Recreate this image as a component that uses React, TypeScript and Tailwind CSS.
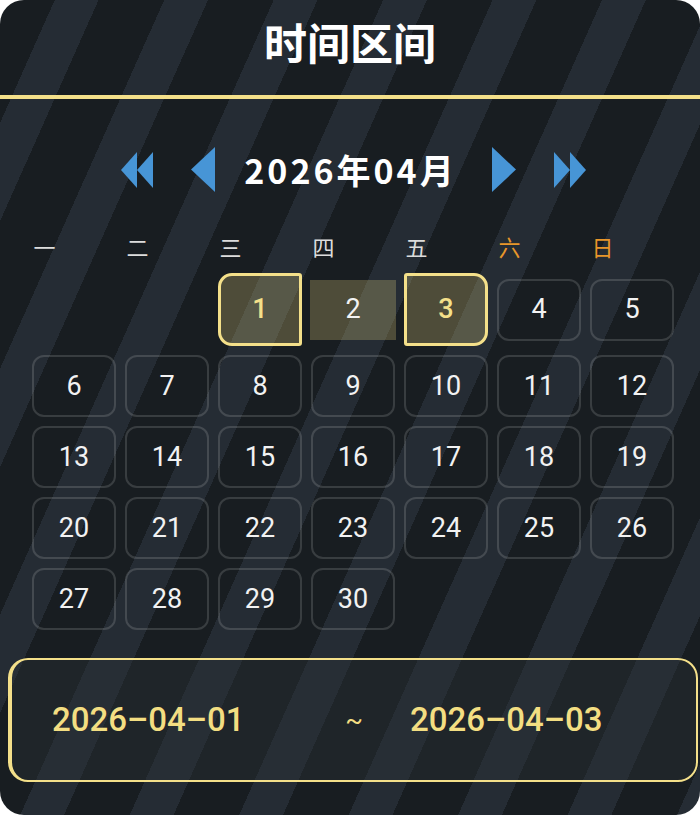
import React from 'react';

// April 2026 starts on a Wednesday
const weekdays = ['一', '二', '三', '四', '五', '六', '日'];
const cells: (number | null)[] = [null, null, ...Array.from({ length: 30 }, (_, i) => i + 1)];

const DoubleLeft = () => (
  <svg width="32" height="36" viewBox="0 0 32 36" className="shrink-0">
    <polygon points="0,18 16,0 16,36" fill="#4795d6" />
    <polygon points="16,18 32,0 32,36" fill="#4795d6" />
  </svg>
);

const SingleLeft = () => (
  <svg width="24" height="45" viewBox="0 0 24 45" className="shrink-0">
    <polygon points="0,22.5 24,0 24,45" fill="#4795d6" />
  </svg>
);

const SingleRight = () => (
  <svg width="24" height="45" viewBox="0 0 24 45" className="shrink-0">
    <polygon points="0,0 24,22.5 0,45" fill="#4795d6" />
  </svg>
);

const DoubleRight = () => (
  <svg width="32" height="36" viewBox="0 0 32 36" className="shrink-0">
    <polygon points="0,0 16,18 0,36" fill="#4795d6" />
    <polygon points="16,0 32,18 16,36" fill="#4795d6" />
  </svg>
);

const DayCell = ({ day }: { day: number | null }) => {
  if (day === null) return <div />;

  // range start
  if (day === 1) {
    return (
      <div className="h-[73px] flex items-center justify-center rounded-l-[14px] rounded-r-[3px] border-[3px] border-[#f4e08a] bg-[#f0dc82]/25 text-[#f4e08a] font-medium">
        {day}
      </div>
    );
  }
  // inside range
  if (day === 2) {
    return (
      <div className="h-[60px] -mx-px flex items-center justify-center bg-[#f0dc82]/25 text-[#f2f2f2]">
        {day}
      </div>
    );
  }
  // range end
  if (day === 3) {
    return (
      <div className="h-[73px] flex items-center justify-center rounded-r-[14px] rounded-l-[3px] border-[3px] border-[#f4e08a] bg-[#f0dc82]/25 text-[#f4e08a] font-medium">
        {day}
      </div>
    );
  }
  return (
    <div className="h-[62px] flex items-center justify-center rounded-[12px] border-2 border-white/[0.14] text-[#f2f2f2]">
      {day}
    </div>
  );
};

export default function App() {
  return (
    <div className="w-[700px] h-[815px] rounded-[24px] overflow-hidden bg-[#181d21] bg-[image:repeating-linear-gradient(114deg,#181d21_0px,#181d21_50px,#252c34_50px,#252c34_90px,#181d21_90px,#181d21_100px)] flex flex-col">
      {/* Header */}
      <div className="h-[95px] flex items-center justify-center pb-[12px]">
        <h1 className="text-[43px] leading-none font-bold text-white font-['Noto_Sans_CJK_SC',sans-serif]">
          时间区间
        </h1>
      </div>
      <div className="h-[4px] bg-[#f4e08a]" />

      {/* Month navigation */}
      <div className="mt-[48px] h-[45px] flex items-center pl-[121px]">
        <DoubleLeft />
        <div className="ml-[38px]"><SingleLeft /></div>
        <div className="ml-[29px] w-[213px] text-center text-[34px] leading-none font-bold tracking-[3px] text-white font-['Noto_Sans_CJK_SC',sans-serif]">
          2026年04月
        </div>
        <div className="ml-[35px]"><SingleRight /></div>
        <div className="ml-[38px]"><DoubleRight /></div>
      </div>

      {/* Weekday header */}
      <div className="mt-[39px] ml-[-2px] w-[651px] h-[30px] grid grid-cols-7 items-center text-[22px] leading-none font-['Noto_Sans_CJK_SC',sans-serif]">
        {weekdays.map((w, i) => (
          <div key={w} className={i >= 5 ? 'text-center text-[#e8962a]' : 'text-center text-[#dcdcdc]'}>
            {w}
          </div>
        ))}
      </div>

      {/* Days */}
      <div className="mt-[12px] ml-[32px] w-[642px] grid grid-cols-7 gap-[9px] items-center text-[27px] font-['Roboto',sans-serif]">
        {cells.map((d, i) => (
          <DayCell key={i} day={d} />
        ))}
      </div>

      {/* Selected range */}
      <div className="mt-[28px] ml-[8px] mr-[2px] h-[124px] rounded-[20px] border-2 border-l-4 border-[#f4e08a] bg-[#2b3138]/40 flex items-center pl-[40px] text-[33px] font-medium text-[#f3de82] font-['Roboto',sans-serif]">
        <span className="w-[290px]">2026–04–01</span>
        <span className="w-[24px] text-center text-[26px] font-normal">~</span>
        <span className="ml-[44px]">2026–04–03</span>
      </div>
    </div>
  );
}
